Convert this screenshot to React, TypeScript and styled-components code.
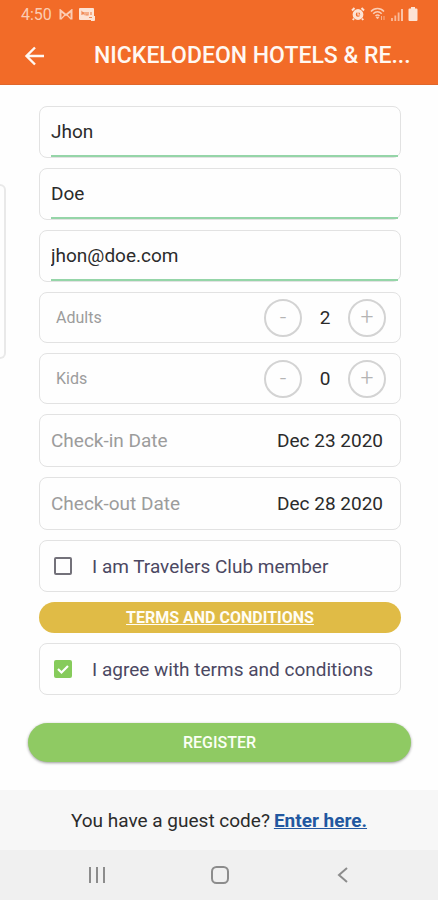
import React, { useState } from "react";
import styled, { createGlobalStyle } from "styled-components";

const GlobalStyle = createGlobalStyle`
  *, *::before, *::after { box-sizing: border-box; }
  body {
    margin: 0;
    background: #fefefe;
    color: #2b2b2b;
    font-family: Roboto, "Liberation Sans", sans-serif;
    font-size: 19px;
  }
  button, input { font: inherit; color: inherit; }
`;

const Screen = styled.div`
  position: relative;
  display: flex;
  flex-direction: column;
  min-height: 100vh;
`;

const Header = styled.header`
  background: #f26b28;
  color: #fff8f2;
  border-bottom: 1px solid #e0672c;
`;

const StatusBar = styled.div`
  display: flex;
  justify-content: space-between;
  align-items: center;
  height: 28px;
  padding: 0 20px 0 21px;
  color: #fbcdb4;
  font-size: 16px;
`;

const StatusGroup = styled.div<{ $gap: number }>`
  display: flex;
  align-items: center;
  gap: ${(p) => p.$gap}px;
`;

const TitleBar = styled.div`
  display: flex;
  align-items: center;
  height: 56px;
  padding: 0 20px;
`;

const BackButton = styled.button`
  display: flex;
  align-items: center;
  flex: none;
  width: 74px;
  padding: 0;
  border: 0;
  background: none;
  cursor: pointer;
`;

const Title = styled.h1`
  flex: 1;
  min-width: 0;
  margin: 0;
  white-space: nowrap;
  font-size: 23px;
  font-weight: 500;
  line-height: 28px;
`;

const PreviousCard = styled.div`
  position: absolute;
  top: 184px;
  left: 0;
  width: 6px;
  height: 175px;
  border: 2px solid #e9e9e9;
  border-left: 0;
  border-radius: 0 8px 8px 0;
`;

const Form = styled.form`
  display: flex;
  flex: 1;
  flex-direction: column;
  padding: 21px 27px 28px 28px;
`;

const Fields = styled.div`
  display: flex;
  flex-direction: column;
  gap: 10px;
  padding: 0 10px 0 11px;
`;

const Card = styled.div<{ $height?: number; $left?: number; $right?: number }>`
  display: flex;
  align-items: center;
  height: ${(p) => p.$height ?? 52}px;
  padding: 0 ${(p) => p.$right ?? 11}px 0 ${(p) => p.$left ?? 11}px;
  border: 1px solid #e2e2e2;
  border-radius: 8px;
`;

const InputCard = styled(Card)`
  align-items: stretch;
  padding: 0 2px 0 11px;
`;

const TextInput = styled.input`
  width: 100%;
  min-width: 0;
  padding: 0;
  border: 0;
  border-bottom: 2px solid #95d5a8;
  background: none;
  outline: 0;
`;

const Label = styled.label<{ $small?: boolean }>`
  flex: 1;
  color: #9c9c9c;
  font-size: ${(p) => (p.$small ? 16 : 19)}px;
  white-space: nowrap;
`;

const Stepper = styled.div`
  display: flex;
  align-items: center;
`;

const StepButton = styled.button`
  width: 38px;
  height: 38px;
  padding: 0;
  border: 2px solid #d3d3d3;
  border-radius: 50%;
  background: none;
  color: #b4b4b4;
  cursor: pointer;
  font-size: 23px;
  font-weight: 300;
  line-height: 32px;
`;

const Count = styled.input`
  width: 46px;
  padding: 0;
  border: 0;
  background: none;
  text-align: center;
  outline: 0;
`;

const DateInput = styled.input`
  width: 120px;
  padding: 0;
  border: 0;
  background: none;
  text-align: right;
  outline: 0;
`;

const CheckLabel = styled.label`
  display: flex;
  align-items: center;
  gap: 20px;
  color: #4b4862;
  cursor: pointer;
  white-space: nowrap;
`;

const CheckBox = styled.input`
  appearance: none;
  grid-area: 1 / 1;
  width: 18px;
  height: 18px;
  margin: 0;
  border: 2px solid #73717a;
  border-radius: 2px;
  background: none;
  cursor: pointer;

  &:checked {
    border-color: #86cb5b;
    background: #86cb5b;
  }
`;

const CheckMark = styled.svg`
  grid-area: 1 / 1;
  pointer-events: none;
`;

const CheckFrame = styled.span`
  display: grid;
  place-items: center;
`;

const TermsButton = styled.button`
  height: 31px;
  padding: 0;
  border: 0;
  border-radius: 16px;
  background: #e0bb46;
  color: #fffdf5;
  font-size: 16px;
  font-weight: 700;
  text-decoration: underline;
  cursor: pointer;
`;

const RegisterButton = styled.button`
  height: 39px;
  margin-top: 28px;
  padding: 0;
  border: 0;
  border-radius: 20px;
  background: #8fca63;
  box-shadow: 0 1px 3px rgba(0, 0, 0, 0.4);
  color: #fbfff5;
  font-size: 16px;
  font-weight: 500;
  cursor: pointer;
`;

const GuestCode = styled.footer`
  display: flex;
  align-items: center;
  justify-content: center;
  gap: 4px;
  height: 60px;
  background: #f7f7f7;
  white-space: nowrap;
`;

const GuestLink = styled.a`
  color: #2257a0;
  font-weight: 700;
`;

const SystemNav = styled.nav`
  display: grid;
  grid-template-columns: repeat(3, 123px);
  justify-content: center;
  height: 50px;
  padding-left: 2px;
  background: #f0f0f0;
`;

const NavButton = styled.button`
  display: grid;
  place-items: center;
  padding: 0;
  border: 0;
  background: none;
  color: #8c8c8c;
`;

function StatusIcons() {
  return (
    <StatusGroup $gap={5}>
      <svg width="14" height="14" viewBox="0 0 14 14" fill="none" stroke="#fde3d4">
        <circle cx="7" cy="7.5" r="3.8" strokeWidth="3.2" />
        <path d="M7 5v3h2" strokeWidth="1.2" />
        <path d="M1 3.5 3.5 1M13 3.5 10.5 1M3 11.5 1.800 13M11 11.5l1.200 1.5" strokeWidth="2" />
      </svg>
      <svg width="16" height="14" viewBox="0 0 16 14" fill="none" stroke="currentColor" strokeWidth="1.5">
        <path d="M1 4.5c3.5-4 9.5-4 13 0M3.2 6.8c2.5-2.6 6-2.6 8.5 0M5.5 9c1.200-1.200 2.800-1.200 4 0" />
        <path d="m7.5 12-1.5-2h3z" fill="currentColor" strokeWidth="0.5" />
        <path d="M11.5 9v4M14 9v4" strokeWidth="1" opacity="0.7" />
      </svg>
      <svg width="12" height="13" viewBox="0 0 12 13" fill="none" stroke="currentColor" strokeWidth="1.800">
        <path d="M1 10v3M4.300 7.5V13M7.600 4.5V13" opacity="0.800" />
        <path d="M11 1v12" />
      </svg>
      <svg width="10" height="14" viewBox="0 0 10 14" fill="#fde3d4">
        <path d="M3 0h4v1.5h1.5q1 0 1 1V13q0 1-1 1h-7q-1 0-1-1V2.5q0-1 1-1H3z" />
      </svg>
    </StatusGroup>
  );
}

function GuestCounter({ id, label, initial }: { id: string; label: string; initial: number }) {
  const [count, setCount] = useState(initial);
  return (
    <Card $height={51} $left={16} $right={14}>
      <Label htmlFor={id} $small>{label}</Label>
      <Stepper>
        <StepButton type="button" aria-label={`Fewer ${label}`} onClick={() => setCount(Math.max(0, count - 1))}>-</StepButton>
        <Count id={id} readOnly value={count} />
        <StepButton type="button" aria-label={`More ${label}`} onClick={() => setCount(count + 1)}>+</StepButton>
      </Stepper>
    </Card>
  );
}

function DateField({ id, label, value }: { id: string; label: string; value: string }) {
  return (
    <Card $height={53} $right={17}>
      <Label htmlFor={id}>{label}</Label>
      <DateInput id={id} readOnly value={value} />
    </Card>
  );
}

function CheckField({ label, initial }: { label: string; initial: boolean }) {
  const [checked, setChecked] = useState(initial);
  return (
    <Card $left={14}>
      <CheckLabel>
        <CheckFrame>
          <CheckBox type="checkbox" checked={checked} onChange={(e) => setChecked(e.target.checked)} />
          {checked && (
            <CheckMark width="18" height="18" viewBox="0 0 18 18" fill="none" stroke="#fff" strokeWidth="2.2">
              <path d="m4 9 3.5 3.5L14 6" />
            </CheckMark>
          )}
        </CheckFrame>
        {label}
      </CheckLabel>
    </Card>
  );
}

export default function App() {
  return (
    <Screen>
      <GlobalStyle />
      <Header>
        <StatusBar>
          <StatusGroup $gap={7}>
            <span>4:50</span>
            <StatusGroup $gap={6}>
              <svg width="14" height="11" viewBox="0 0 14 11" fill="none" stroke="currentColor">
                <path d="M1.5 10.5V1.5L7 6l5.5-4.5v9" strokeWidth="2" />
                <path d="M2 10l4-4M12 10 8 6" strokeWidth="1.2" />
              </svg>
              <svg width="16" height="13" viewBox="0 0 16 13">
                <path d="M1 0h13q1 0 1 1v7h1v4q0 1-1 1h-3v-1H1q-1 0-1-1V1q0-1 1-1z" fill="#fde3d4" />
                <path d="M3 7V4l2 2V4M7 4v3h2V4M12 4v3M10 9.5h3" fill="none" stroke="#f08a56" strokeWidth="1.2" />
              </svg>
            </StatusGroup>
          </StatusGroup>
          <StatusIcons />
        </StatusBar>
        <TitleBar>
          <BackButton type="button" aria-label="Back">
            <svg width="30" height="24" viewBox="0 0 30 24" fill="none" stroke="currentColor" strokeWidth="2.4">
              <path d="M24 12H7M15 3.5 6.5 12l8.5 8.5" />
            </svg>
          </BackButton>
          <Title>NICKELODEON HOTELS &amp; RE...</Title>
        </TitleBar>
      </Header>
      <PreviousCard />
      <Form onSubmit={(e) => e.preventDefault()}>
        <Fields>
          <InputCard><TextInput aria-label="First name" defaultValue="Jhon" /></InputCard>
          <InputCard><TextInput aria-label="Last name" defaultValue="Doe" /></InputCard>
          <InputCard><TextInput aria-label="Email" type="email" defaultValue="jhon@doe.com" /></InputCard>
          <GuestCounter id="adults" label="Adults" initial={2} />
          <GuestCounter id="kids" label="Kids" initial={0} />
          <DateField id="check-in" label="Check-in Date" value="Dec 23 2020" />
          <DateField id="check-out" label="Check-out Date" value="Dec 28 2020" />
          <CheckField label="I am Travelers Club member" initial={false} />
          <TermsButton type="button">TERMS AND CONDITIONS</TermsButton>
          <CheckField label="I agree with terms and conditions" initial />
        </Fields>
        <RegisterButton type="submit">REGISTER</RegisterButton>
      </Form>
      <GuestCode>
        <span>You have a guest code?</span>
        <GuestLink href="#guest-code">Enter here.</GuestLink>
      </GuestCode>
      <SystemNav aria-label="System">
        <NavButton type="button" aria-label="Recent apps">
          <svg width="18" height="18" viewBox="0 0 18 18" fill="none" stroke="currentColor" strokeWidth="2">
            <path d="M2 1v16M9 1v16M16 1v16" />
          </svg>
        </NavButton>
        <NavButton type="button" aria-label="Home">
          <svg width="18" height="18" viewBox="0 0 18 18" fill="none" stroke="currentColor" strokeWidth="2">
            <rect x="1" y="1" width="16" height="16" rx="4.5" />
          </svg>
        </NavButton>
        <NavButton type="button" aria-label="Back">
          <svg width="18" height="18" viewBox="0 0 18 18" fill="none" stroke="currentColor" strokeWidth="2">
            <path d="m13 2-8 7 8 7" />
          </svg>
        </NavButton>
      </SystemNav>
    </Screen>
  );
}
